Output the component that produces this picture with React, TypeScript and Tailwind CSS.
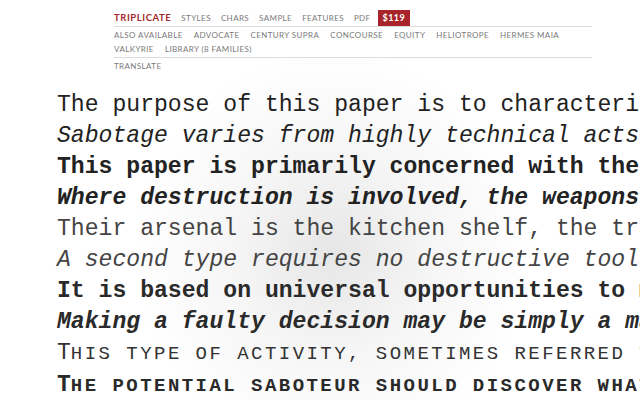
import React from "react"

const mono = "font-['Liberation_Mono','Courier_New',monospace]"

const navTop = ["STYLES", "CHARS", "SAMPLE", "FEATURES", "PDF"]
const families = [
  "ALSO AVAILABLE",
  "ADVOCATE",
  "CENTURY SUPRA",
  "CONCOURSE",
  "EQUITY",
  "HELIOTROPE",
  "HERMES MAIA",
  "VALKYRIE",
  "LIBRARY (8 FAMILIES)",
]

type Line = { text: string; cls: string; caps?: boolean }

const lines: Line[] = [
  { text: "The purpose of this paper is to characterize simple sabotage", cls: "text-[#222]" },
  { text: "Sabotage varies from highly technical acts that require", cls: "italic text-[#222]" },
  { text: "This paper is primarily concerned with the second type", cls: "font-bold text-[#222]" },
  { text: "Where destruction is involved, the weapons of the citizen", cls: "font-bold italic text-[#222]" },
  { text: "Their arsenal is the kitchen shelf, the trash pile", cls: "text-[#444]" },
  { text: "A second type requires no destructive tools whatsoever", cls: "italic text-[#444]" },
  { text: "It is based on universal opportunities to make faulty decisions", cls: "font-bold text-[#2a2a2a]" },
  { text: "Making a faulty decision may be simply a matter of placing", cls: "font-bold italic text-[#2a2a2a]" },
  { text: "This type of activity, sometimes referred to as the human element", cls: "text-[#333]", caps: true },
  { text: "The potential saboteur should discover what types of faulty decisions", cls: "font-bold text-[#2a2a2a]", caps: true },
]

// small caps that keep the monospace advance: lowercase runs are set smaller and tracked out
function SmallCaps({ text }: { text: string }) {
  const parts = text.match(/[A-Z]+|[^A-Z]+/g) ?? []
  return (
    <>
      {parts.map((p, i) =>
        /^[A-Z]+$/.test(p) ? (
          <span key={i}>{p}</span>
        ) : (
          <span key={i} className="uppercase text-[19px] tracking-[2.46px]">
            {p}
          </span>
        )
      )}
    </>
  )
}

function Header() {
  return (
    <div className="ml-[114px] w-[478px] pt-[10px] font-['Lato','Open_Sans',sans-serif] text-[8px] tracking-[0.05em] text-[#7a7a7a]">
      <div className="flex items-center gap-[10px] h-[17px] border-b border-[#dcdcdc]">
        <span className="font-bold text-[9.5px] tracking-[0.06em] text-[#a4282c]">TRIPLICATE</span>
        {navTop.map((n) => (
          <span key={n}>{n}</span>
        ))}
        <span className="-ml-[3px] bg-[#a8262b] text-white font-bold text-[9px] h-[16px] px-[5px] flex items-center">
          $119
        </span>
      </div>
      <div className="flex flex-wrap gap-x-[11px] pt-[1px] pb-[1px] leading-[14px] border-b border-[#dcdcdc]">
        {families.map((f) => (
          <span key={f}>{f}</span>
        ))}
      </div>
      <div className="leading-[14px] pt-[1px]">TRANSLATE</div>
    </div>
  )
}

export default function App() {
  return (
    <div className="w-[640px] h-[400px] overflow-hidden bg-[radial-gradient(circle_at_52%_63%,#e6e6e6_0%,#f6f6f6_25%,#ffffff_48%)]">
      <Header />
      <div className={`${mono} mt-[17px] pl-[57px] text-[23.1px] leading-[31px]`}>
        {lines.map((l) => (
          <div key={l.text} className={`whitespace-nowrap ${l.cls}`}>
            {l.caps ? <SmallCaps text={l.text} /> : l.text}
          </div>
        ))}
      </div>
    </div>
  )
}
